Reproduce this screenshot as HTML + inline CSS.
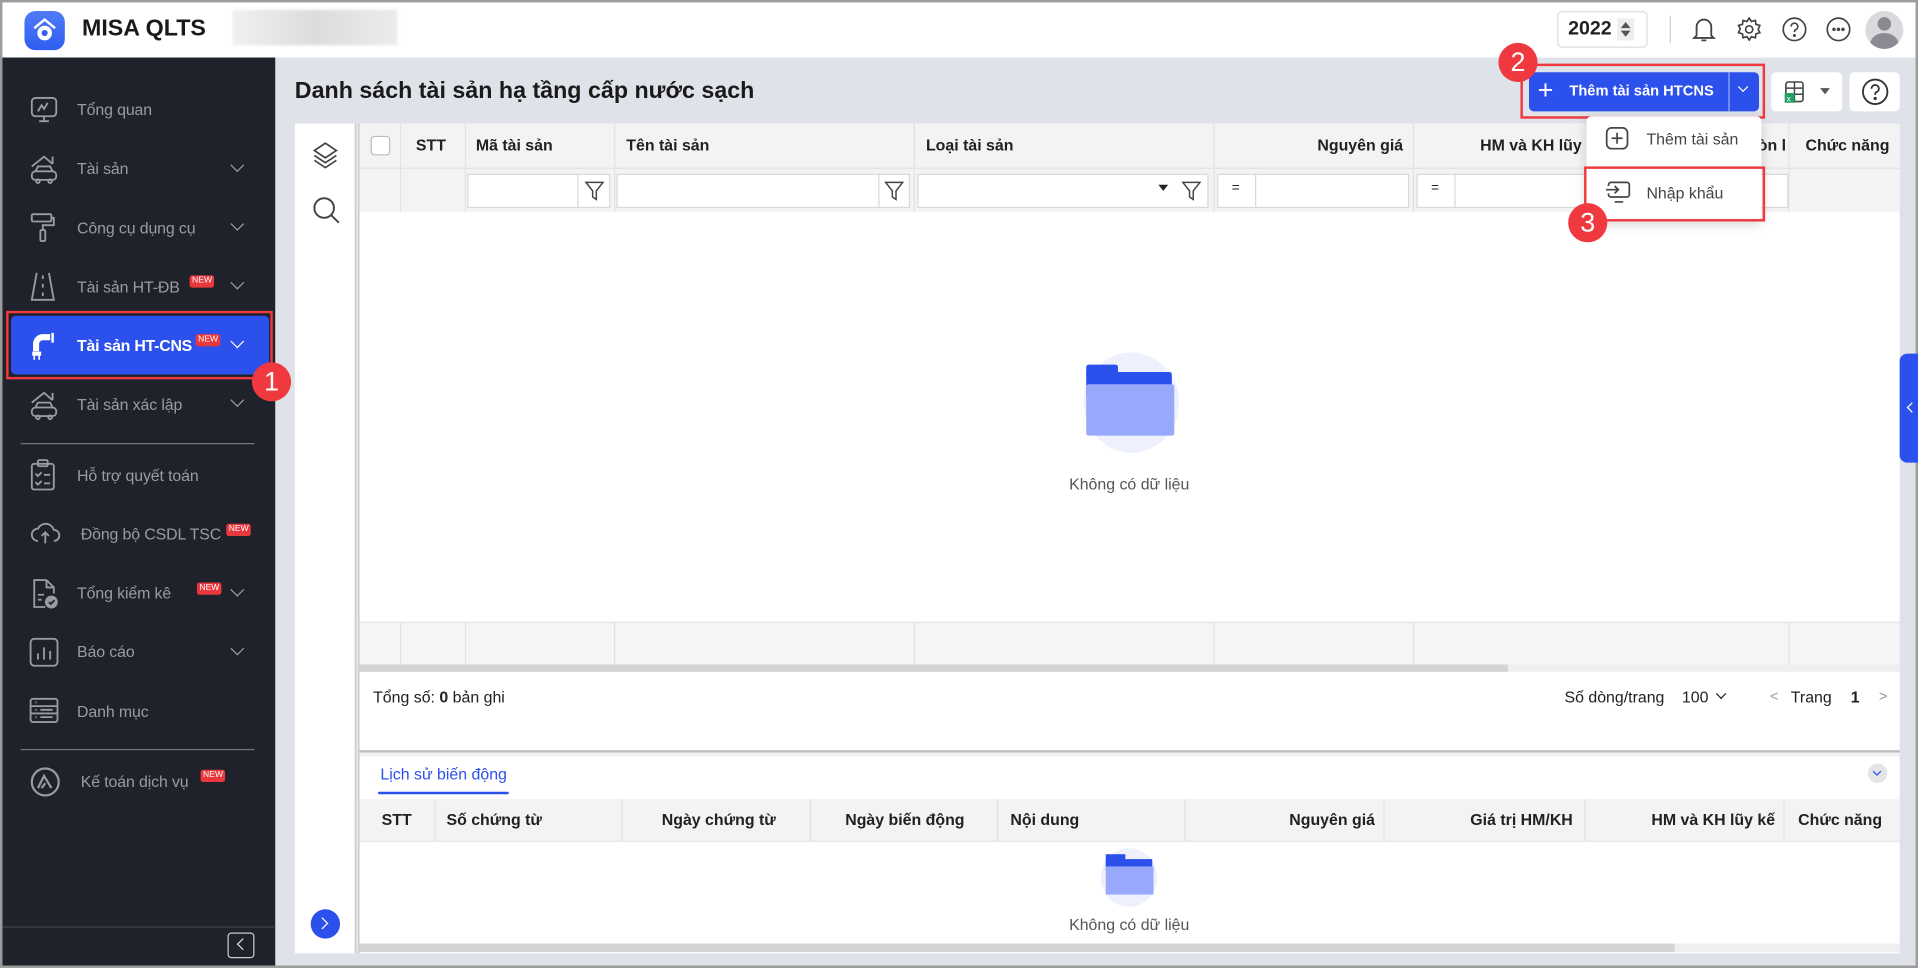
<!DOCTYPE html>
<html><head><meta charset="utf-8"><style>
*{box-sizing:border-box;margin:0;padding:0}
html,body{width:1918px;height:968px;overflow:hidden;background:#fff}
#st{position:absolute;left:0;top:0;width:1568px;height:791px;transform:scale(1.22321,1.22377);transform-origin:0 0;font-family:"Liberation Sans",Arial,sans-serif;color:#212121;overflow:hidden;background:#dfe2e8}
.a{position:absolute}
.t{position:absolute;white-space:nowrap}
.nav{position:absolute;left:63px;color:#9a9ca3;font-size:13px;letter-spacing:-0.1px}
.chev{position:absolute;left:190px;width:8px;height:8px;border-right:1.6px solid #9a9ca3;border-bottom:1.6px solid #9a9ca3;transform:rotate(45deg)}
.new{position:absolute;background:#e8383d;color:#fff;font-size:7px;padding:1px 2px;border-radius:2px;line-height:8px}
.hd{font-size:13px;font-weight:bold;color:#212121}
.badge{position:absolute;width:32px;height:32px;border-radius:50%;background:#f0393e;color:#fff;font-size:22px;text-align:center;line-height:32px}
.red{position:absolute;border:2px solid #f0393e}
.vl{position:absolute;width:1px;background:#e2e2e2}
.inp{position:absolute;background:#fff;border:1px solid #d9d9d9;height:28px;top:142px}
</style></head><body><div id="st">
<div class="a" style="left:0;top:0;width:1568px;height:2px;background:#9c9c9c"></div>
<div class="a" style="left:0;top:0;width:2px;height:791px;background:#9c9c9c"></div>
<div class="a" style="left:1566px;top:0;width:2px;height:791px;background:#9c9c9c"></div>
<div class="a" style="left:0;top:789px;width:1568px;height:2px;background:#9c9c9c"></div>
<div class="a" style="left:2px;top:2px;width:1564px;height:45px;background:#fff"></div>
<div class="a" style="left:20px;top:9px;width:33px;height:32px;border-radius:9px;background:linear-gradient(#4f7bf7,#2f5ef0)"></div>
<svg class="a" style="left:25px;top:13px" width="23" height="24" viewBox="0 0 23 24"><path d="M3 10 L11.5 3 L20 10" fill="none" stroke="#fff" stroke-width="2"/><circle cx="11.5" cy="14" r="6" fill="#fff"/><circle cx="11.5" cy="14" r="2.5" fill="#2f5ef0"/></svg>
<div class="t" style="left:67px;top:13px;font-size:19px;font-weight:bold;color:#1a1a1a">MISA QLTS</div>
<div class="a" style="left:190px;top:8px;width:135px;height:29px;background:linear-gradient(90deg,#f0f0f0,#dcdcdc,#ececec);filter:blur(1px)"></div>
<div class="a" style="left:1273px;top:9px;width:74px;height:30px;border:1px solid #ddd;border-radius:4px"></div>
<div class="t" style="left:1282px;top:15px;font-size:16px;font-weight:bold">2022</div>
<div class="a" style="left:1322px;top:15px;width:14px;height:18px;background:#eee"></div>
<svg class="a" style="left:1324px;top:16px" width="10" height="16"><path d="M1 7 L5 2 L9 7Z M1 9 L5 14 L9 9Z" fill="#555"/></svg>
<div class="a" style="left:1365px;top:13px;width:1px;height:22px;background:#ccc"></div>
<svg class="a" style="left:1381px;top:12px" width="24" height="24" viewBox="0 0 24 24" fill="none" stroke="#444" stroke-width="1.5"><path d="M6 17 V10 a6 6 0 0 1 12 0 V17 L20 19 H4 Z"/><path d="M10 21 h4"/></svg>
<svg class="a" style="left:1419px;top:13px" width="22" height="22" viewBox="0 0 24 24" fill="none" stroke="#444" stroke-width="1.5"><circle cx="12" cy="12" r="3.2"/><path d="M12 2 l2 3 3.5-1 .5 3.5 3.5 1-1.5 3.5 1.5 3-3.5 1-.5 3.5-3.5-1-2 3-2-3-3.5 1-.5-3.5-3.5-1 1.5-3.5-1.5-3 3.5-1 .5-3.5 3.5 1z"/></svg>
<svg class="a" style="left:1456px;top:13px" width="22" height="22" viewBox="0 0 24 24" fill="none" stroke="#444" stroke-width="1.5"><circle cx="12" cy="12" r="10"/><path d="M9 9.5 a3 3 0 1 1 4 2.8 c-1 .4-1 1-1 2.2"/><circle cx="12" cy="17.5" r=".6" fill="#444"/></svg>
<svg class="a" style="left:1492px;top:13px" width="22" height="22" viewBox="0 0 24 24" fill="none" stroke="#444" stroke-width="1.5"><circle cx="12" cy="12" r="10"/><circle cx="8" cy="12" r=".8" fill="#444"/><circle cx="12" cy="12" r=".8" fill="#444"/><circle cx="16" cy="12" r=".8" fill="#444"/></svg>
<div class="a" style="left:1525px;top:9px;width:31px;height:31px;border-radius:50%;background:#d9d9de;overflow:hidden"><div class="a" style="left:10px;top:5px;width:11px;height:11px;border-radius:50%;background:#8a8b92"></div><div class="a" style="left:4px;top:18px;width:23px;height:18px;border-radius:50%;background:#8a8b92"></div></div>
<div class="a" style="left:2px;top:47px;width:223px;height:742px;background:#1f222b"></div>
<svg class="a" style="left:24px;top:78px" width="24" height="24" viewBox="0 0 24 24" fill="none" stroke="#9a9ca3" stroke-width="1.5"><rect x="2" y="2" width="20" height="15" rx="3"/><path d="M7 13 l3-5 2 3 3-5 M12 17 v4 M8 21 h8"/></svg>
<div class="nav" style="top:82px">Tổng quan</div>
<svg class="a" style="left:23px;top:125px" width="26" height="26" viewBox="0 0 26 26" fill="none" stroke="#9a9ca3" stroke-width="1.5"><path d="M3 11 L13 3 L20 9 M20 3 v6"/><rect x="3" y="15" width="20" height="7" rx="3"/><path d="M6 15 l2-4 h10 l2 4"/><circle cx="8" cy="23" r="1.5"/><circle cx="18" cy="23" r="1.5"/></svg>
<div class="nav" style="top:130px">Tài sản</div><div class="chev" style="top:131px"></div>
<svg class="a" style="left:24px;top:173px" width="22" height="26" viewBox="0 0 22 26" fill="none" stroke="#9a9ca3" stroke-width="1.5"><rect x="2" y="2" width="16" height="6" rx="1"/><path d="M18 5 h2 v6 h-9 v4"/><rect x="9" y="15" width="4" height="9" rx="1"/></svg>
<div class="nav" style="top:179px">Công cụ dụng cụ</div><div class="chev" style="top:179px"></div>
<svg class="a" style="left:24px;top:221px" width="22" height="26" viewBox="0 0 22 26" fill="none" stroke="#9a9ca3" stroke-width="1.5"><path d="M6 2 L2 24 H20 L16 2 M11 4 v3 M11 11 v3 M11 18 v3"/></svg>
<div class="nav" style="top:227px">Tài sản HT-ĐB</div><div class="new" style="left:155px;top:225px">NEW</div><div class="chev" style="top:227px"></div>
<div class="red" style="left:5px;top:254px;width:218px;height:56px"></div>
<div class="a" style="left:9px;top:258px;width:211px;height:48px;border-radius:4px;background:#2c50eb"></div>
<svg class="a" style="left:24px;top:269px" width="24" height="26" viewBox="0 0 24 26" fill="#fff"><path d="M17 4 h-6 a8 8 0 0 0 -8 8 v6 h5 v-6 a3 3 0 0 1 3-3 h6z"/><rect x="18" y="3" width="2" height="8"/><path d="M3 19 h6 v2 h-6z M4 21 v4 M8 21 v4" stroke="#fff" stroke-width="1.3"/></svg>
<div class="t" style="left:63px;top:275px;color:#fff;font-size:13px;font-weight:bold;letter-spacing:-0.2px">Tài sản HT-CNS</div><div class="new" style="left:160px;top:273px">NEW</div>
<div class="chev" style="top:275px;border-color:#fff"></div>
<div class="badge" style="left:206px;top:296px">1</div>
<svg class="a" style="left:23px;top:318px" width="26" height="26" viewBox="0 0 26 26" fill="none" stroke="#9a9ca3" stroke-width="1.5"><path d="M3 11 L13 3 L20 9 M20 3 v6"/><rect x="3" y="15" width="20" height="7" rx="3"/><path d="M6 15 l2-4 h10 l2 4"/><circle cx="8" cy="23" r="1.5"/><circle cx="18" cy="23" r="1.5"/></svg>
<div class="nav" style="top:323px">Tài sản xác lập</div><div class="chev" style="top:323px"></div>
<div class="a" style="left:17px;top:362px;width:191px;height:1px;background:#777"></div>
<svg class="a" style="left:25px;top:375px" width="20" height="26" viewBox="0 0 20 26" fill="none" stroke="#9a9ca3" stroke-width="1.5"><rect x="1" y="4" width="18" height="21" rx="2"/><rect x="6" y="1" width="8" height="5" rx="1"/><path d="M4 12 l2 2 3-3 M11 13 h5 M4 19 l2 2 3-3 M11 20 h5"/></svg>
<div class="nav" style="top:381px">Hỗ trợ quyết toán</div>
<svg class="a" style="left:24px;top:424px" width="26" height="22" viewBox="0 0 26 22" fill="none" stroke="#9a9ca3" stroke-width="1.5"><path d="M7 18 a5 5 0 0 1 0-10 a7 7 0 0 1 13 1 a4.5 4.5 0 0 1 0 9 M13 20 v-9 M10 14 l3-3 3 3"/></svg>
<div class="nav" style="top:429px;left:66px">Đồng bộ CSDL TSC</div><div class="new" style="left:185px;top:428px">NEW</div>
<svg class="a" style="left:25px;top:472px" width="24" height="26" viewBox="0 0 24 26" fill="none" stroke="#9a9ca3" stroke-width="1.5"><path d="M13 2 H3 v22 h9 M13 2 l6 6 v5 M13 2 v6 h6 M6 14 h5 M6 18 h3"/><circle cx="17" cy="20" r="4.5" fill="#9a9ca3"/><path d="M15 20 l1.5 1.5 3-3" stroke="#1f222b"/></svg>
<div class="nav" style="top:477px">Tổng kiểm kê</div><div class="new" style="left:161px;top:476px">NEW</div><div class="chev" style="top:478px"></div>
<svg class="a" style="left:24px;top:521px" width="24" height="24" viewBox="0 0 24 24" fill="none" stroke="#9a9ca3" stroke-width="1.5"><rect x="1" y="1" width="22" height="22" rx="3"/><path d="M7 18 v-5 M12 18 v-10 M17 18 v-7"/></svg>
<div class="nav" style="top:525px">Báo cáo</div><div class="chev" style="top:526px"></div>
<svg class="a" style="left:24px;top:570px" width="24" height="22" viewBox="0 0 24 22" fill="none" stroke="#9a9ca3" stroke-width="1.5"><rect x="1" y="1" width="22" height="19" rx="2"/><path d="M1 7 h22 M1 13 h22 M5 4 h1 M5 10 h1 M5 16 h1 M9 10 h10 M9 16 h10"/></svg>
<div class="nav" style="top:574px">Danh mục</div>
<div class="a" style="left:17px;top:612px;width:191px;height:1px;background:#777"></div>
<svg class="a" style="left:24px;top:626px" width="26" height="26" viewBox="0 0 26 26" fill="none" stroke="#9a9ca3" stroke-width="1.8"><circle cx="13" cy="13" r="11"/><path d="M7 18 L12 8 L18 18 M10 18 l3-4"/></svg>
<div class="nav" style="top:631px;left:66px">Kế toán dịch vụ</div><div class="new" style="left:164px;top:629px">NEW</div>
<div class="a" style="left:2px;top:757px;width:223px;height:1px;background:#444"></div>
<div class="a" style="left:186px;top:762px;width:22px;height:21px;border:1.3px solid #ccc;border-radius:3px"></div>
<div class="a" style="left:195px;top:768px;width:7px;height:7px;border-left:1.5px solid #ddd;border-bottom:1.5px solid #ddd;transform:rotate(45deg)"></div>
<div class="t" style="left:241px;top:64px;font-size:19px;font-weight:bold;color:#1a1a1a">Danh sách tài sản hạ tầng cấp nước sạch</div>
<div class="red" style="left:1243px;top:52px;width:200px;height:45px"></div>
<div class="a" style="left:1250px;top:59px;width:188px;height:32px;border-radius:4px;background:#2c50eb"></div>
<div class="a" style="left:1413px;top:59px;width:1px;height:32px;background:#9bb0f5"></div>
<div class="t" style="left:1257px;top:61px;color:#fff;font-size:22px;font-weight:300">+</div>
<div class="t" style="left:1283px;top:67px;color:#fff;font-size:12px;font-weight:bold">Thêm tài sản HTCNS</div>
<div class="a" style="left:1422px;top:68px;width:6px;height:6px;border-right:1.8px solid #fff;border-bottom:1.8px solid #fff;transform:rotate(45deg)"></div>
<div class="badge" style="left:1225px;top:35px">2</div>
<div class="a" style="left:1448px;top:59px;width:58px;height:32px;border-radius:4px;background:#fff"></div>
<svg class="a" style="left:1458px;top:66px" width="20" height="19" viewBox="0 0 20 19"><rect x="2" y="1" width="14" height="16" rx="2" fill="none" stroke="#444" stroke-width="1.3"/><path d="M2 6 h14 M2 11 h14 M9 1 v16" stroke="#444" stroke-width="1.2"/><rect x="1" y="10" width="8" height="8" fill="#21a366"/><text x="2.5" y="17" font-size="7" fill="#fff" font-family="Liberation Sans">x</text></svg>
<svg class="a" style="left:1487px;top:71px" width="10" height="7"><path d="M1 1 L9 1 L5 6Z" fill="#555"/></svg>
<div class="a" style="left:1512px;top:59px;width:41px;height:32px;border-radius:4px;background:#fff"></div>
<svg class="a" style="left:1521px;top:63px" width="24" height="24" viewBox="0 0 24 24" fill="none" stroke="#333" stroke-width="1.5"><circle cx="12" cy="12" r="10"/><path d="M9 9.5 a3 3 0 1 1 4 2.8 c-1 .4-1 1-1 2.2"/><circle cx="12" cy="17.5" r=".6" fill="#333"/></svg>
<div class="a" style="left:241px;top:101px;width:50px;height:678px;background:#fff"></div>
<div class="a" style="left:290px;top:101px;width:1px;height:678px;background:#c8c8c8"></div>
<div class="a" style="left:293px;top:101px;width:1px;height:678px;background:#c8c8c8"></div>
<svg class="a" style="left:255px;top:115px" width="22" height="24" viewBox="0 0 22 24" fill="none" stroke="#444" stroke-width="1.4"><path d="M11 2 L20 8 L11 14 L2 8Z M2 12 L11 18 L20 12 M2 16 L11 22 L20 16"/></svg>
<svg class="a" style="left:255px;top:160px" width="24" height="24" viewBox="0 0 24 24" fill="none" stroke="#444" stroke-width="1.6"><circle cx="10" cy="10" r="8"/><path d="M16 16 L22 22"/></svg>
<div class="a" style="left:254px;top:743px;width:24px;height:24px;border-radius:50%;background:#2c50eb"></div>
<div class="a" style="left:260px;top:751px;width:7px;height:7px;border-right:1.6px solid #fff;border-top:1.6px solid #fff;transform:rotate(45deg)"></div>
<div class="a" style="left:294px;top:101px;width:1259px;height:678px;background:#fff"></div>
<div class="a" style="left:294px;top:101px;width:1259px;height:72px;background:#f3f3f3"></div>
<div class="a" style="left:294px;top:137px;width:1259px;height:1px;background:#e2e2e2"></div>
<div class="vl" style="left:327px;top:101px;height:72px"></div><div class="vl" style="left:380px;top:101px;height:72px"></div><div class="vl" style="left:502px;top:101px;height:72px"></div><div class="vl" style="left:747px;top:101px;height:72px"></div><div class="vl" style="left:992px;top:101px;height:72px"></div><div class="vl" style="left:1155px;top:101px;height:72px"></div><div class="vl" style="left:1462px;top:101px;height:72px"></div>
<div class="a" style="left:303px;top:111px;width:16px;height:16px;border:1px solid #bbb;border-radius:3px;background:#fff"></div>
<div class="t hd" style="left:340px;top:111px">STT</div>
<div class="t hd" style="left:389px;top:111px">Mã tài sản</div>
<div class="t hd" style="left:512px;top:111px">Tên tài sản</div>
<div class="t hd" style="left:757px;top:111px">Loại tài sản</div>
<div class="t hd" style="left:1077px;top:111px">Nguyên giá</div>
<div class="t hd" style="left:1210px;top:111px">HM và KH lũy kế</div>
<div class="t hd" style="left:1437px;top:111px">òn l</div>
<div class="t hd" style="left:1476px;top:111px">Chức năng</div>
<div class="inp" style="left:382px;width:117px"></div><div class="a" style="left:472px;top:142px;width:1px;height:28px;background:#d9d9d9"></div>
<div class="inp" style="left:504px;width:240px"></div><div class="a" style="left:718px;top:142px;width:1px;height:28px;background:#d9d9d9"></div>
<svg class="a" style="left:478px;top:147px" width="16" height="18" viewBox="0 0 16 18" fill="none" stroke="#444" stroke-width="1.2"><path d="M1 2 H15 L9.5 9 V16 L6.5 14 V9Z"/></svg>
<svg class="a" style="left:723px;top:147px" width="16" height="18" viewBox="0 0 16 18" fill="none" stroke="#444" stroke-width="1.2"><path d="M1 2 H15 L9.5 9 V16 L6.5 14 V9Z"/></svg>
<div class="inp" style="left:750px;width:238px"></div>
<svg class="a" style="left:946px;top:150px" width="10" height="8"><path d="M1 1 H9 L5 6Z" fill="#222"/></svg>
<svg class="a" style="left:966px;top:147px" width="16" height="18" viewBox="0 0 16 18" fill="none" stroke="#444" stroke-width="1.2"><path d="M1 2 H15 L9.5 9 V16 L6.5 14 V9Z"/></svg>
<div class="inp" style="left:995px;width:157px"></div><div class="a" style="left:1026px;top:142px;width:1px;height:28px;background:#d9d9d9"></div><div class="t" style="left:1007px;top:148px;font-size:11px">=</div>
<div class="inp" style="left:1158px;width:304px"></div><div class="a" style="left:1189px;top:142px;width:1px;height:28px;background:#d9d9d9"></div><div class="t" style="left:1170px;top:148px;font-size:11px">=</div>
<div class="a" style="left:886px;top:288px;width:78px;height:82px;border-radius:50%;background:#eef1fd"></div>
<div class="a" style="left:888px;top:298px;width:26px;height:10px;background:#2c50eb;border-radius:2px 2px 0 0"></div>
<div class="a" style="left:888px;top:304px;width:70px;height:20px;background:#2c50eb;border-radius:2px"></div>
<div class="a" style="left:888px;top:314px;width:72px;height:42px;background:#98a9fb;border-radius:2px"></div>
<div class="t" style="left:874px;top:388px;font-size:13px;color:#555">Không có dữ liệu</div>
<div class="a" style="left:294px;top:508px;width:1259px;height:35px;background:#f5f5f5;border-top:1px solid #e5e5e5"></div>
<div class="vl" style="left:327px;top:508px;height:35px"></div><div class="vl" style="left:380px;top:508px;height:35px"></div><div class="vl" style="left:502px;top:508px;height:35px"></div><div class="vl" style="left:747px;top:508px;height:35px"></div><div class="vl" style="left:992px;top:508px;height:35px"></div><div class="vl" style="left:1155px;top:508px;height:35px"></div><div class="vl" style="left:1462px;top:508px;height:35px"></div>
<div class="a" style="left:294px;top:543px;width:939px;height:6px;background:#d4d4d4"></div>
<div class="a" style="left:1233px;top:543px;width:320px;height:6px;background:#efefef"></div>
<div class="t" style="left:305px;top:562px;font-size:13px">Tổng số: <b>0</b> bản ghi</div>
<div class="t" style="left:1279px;top:562px;font-size:13px">Số dòng/trang</div>
<div class="t" style="left:1375px;top:562px;font-size:13px">100</div>
<div class="a" style="left:1404px;top:564px;width:6px;height:6px;border-right:1.6px solid #222;border-bottom:1.6px solid #222;transform:rotate(45deg)"></div>
<div class="t" style="left:1447px;top:562px;font-size:12px;color:#999">&lt;</div>
<div class="t" style="left:1464px;top:562px;font-size:13px">Trang</div>
<div class="t" style="left:1513px;top:562px;font-size:13px;font-weight:bold">1</div>
<div class="t" style="left:1536px;top:562px;font-size:12px;color:#999">&gt;</div>
<div class="a" style="left:294px;top:613px;width:1259px;height:2px;background:#bdbdbd"></div>
<div class="a" style="left:294px;top:615px;width:1259px;height:3px;background:#f0f0f0"></div>
<div class="t" style="left:311px;top:625px;font-size:13px;color:#2c50eb">Lịch sử biến động</div>
<div class="a" style="left:309px;top:647px;width:107px;height:2px;background:#2c50eb;border-radius:1px"></div>
<div class="a" style="left:1527px;top:624px;width:16px;height:16px;border-radius:50%;background:#e5e5e8"></div>
<div class="a" style="left:1532px;top:628px;width:5px;height:5px;border-right:1.3px solid #2c50eb;border-bottom:1.3px solid #2c50eb;transform:rotate(45deg)"></div>
<div class="a" style="left:294px;top:653px;width:1259px;height:35px;background:#f3f3f3;border-bottom:1px solid #e5e5e5"></div>
<div class="vl" style="left:355px;top:653px;height:35px"></div><div class="vl" style="left:508px;top:653px;height:35px"></div><div class="vl" style="left:662px;top:653px;height:35px"></div><div class="vl" style="left:815px;top:653px;height:35px"></div><div class="vl" style="left:968px;top:653px;height:35px"></div><div class="vl" style="left:1131px;top:653px;height:35px"></div><div class="vl" style="left:1295px;top:653px;height:35px"></div><div class="vl" style="left:1458px;top:653px;height:35px"></div>
<div class="t hd" style="left:312px;top:662px">STT</div>
<div class="t hd" style="left:365px;top:662px">Số chứng từ</div>
<div class="t hd" style="left:541px;top:662px">Ngày chứng từ</div>
<div class="t hd" style="left:691px;top:662px">Ngày biến động</div>
<div class="t hd" style="left:826px;top:662px">Nội dung</div>
<div class="t hd" style="left:1054px;top:662px">Nguyên giá</div>
<div class="t hd" style="left:1202px;top:662px">Giá trị HM/KH</div>
<div class="t hd" style="left:1350px;top:662px">HM và KH lũy kế</div>
<div class="t hd" style="left:1470px;top:662px">Chức năng</div>
<div class="a" style="left:900px;top:693px;width:46px;height:48px;border-radius:50%;background:#eef1fd"></div>
<div class="a" style="left:904px;top:698px;width:16px;height:8px;background:#2c50eb"></div>
<div class="a" style="left:904px;top:702px;width:38px;height:10px;background:#2c50eb"></div>
<div class="a" style="left:904px;top:708px;width:39px;height:23px;background:#98a9fb"></div>
<div class="t" style="left:874px;top:748px;font-size:13px;color:#555">Không có dữ liệu</div>
<div class="a" style="left:294px;top:771px;width:1259px;height:7px;background:#efefef"></div>
<div class="a" style="left:294px;top:771px;width:1075px;height:7px;background:#d4d4d4"></div>
<div class="a" style="left:1553px;top:289px;width:20px;height:89px;border-radius:6px;background:#2c50eb"></div>
<div class="a" style="left:1560px;top:330px;width:6px;height:6px;border-left:1.5px solid #fff;border-bottom:1.5px solid #fff;transform:rotate(45deg)"></div>
<div class="a" style="left:1297px;top:95px;width:143px;height:85px;background:#fff;border-radius:4px;box-shadow:0 3px 10px rgba(0,0,0,.18)"></div>
<svg class="a" style="left:1312px;top:103px" width="20" height="20" viewBox="0 0 20 20" fill="none" stroke="#444" stroke-width="1.4"><rect x="1.5" y="1.5" width="17" height="17" rx="4"/><path d="M10 5.5 v9 M5.5 10 h9"/></svg>
<div class="t" style="left:1346px;top:106px;font-size:13px;color:#444">Thêm tài sản</div>
<svg class="a" style="left:1312px;top:148px" width="22" height="20" viewBox="0 0 22 20" fill="none" stroke="#444" stroke-width="1.4"><path d="M3 4 V3 a2 2 0 0 1 2-2 h13 a2 2 0 0 1 2 2 v8 a2 2 0 0 1-2 2 H5 a2 2 0 0 1-2-2 V10 M1 7 h10 M8 4 l3 3 -3 3 M8 17 h7"/></svg>
<div class="t" style="left:1346px;top:150px;font-size:13px;color:#444">Nhập khẩu</div>
<div class="red" style="left:1295px;top:136px;width:148px;height:45px"></div>
<div class="badge" style="left:1282px;top:166px">3</div>
</div></body></html>
